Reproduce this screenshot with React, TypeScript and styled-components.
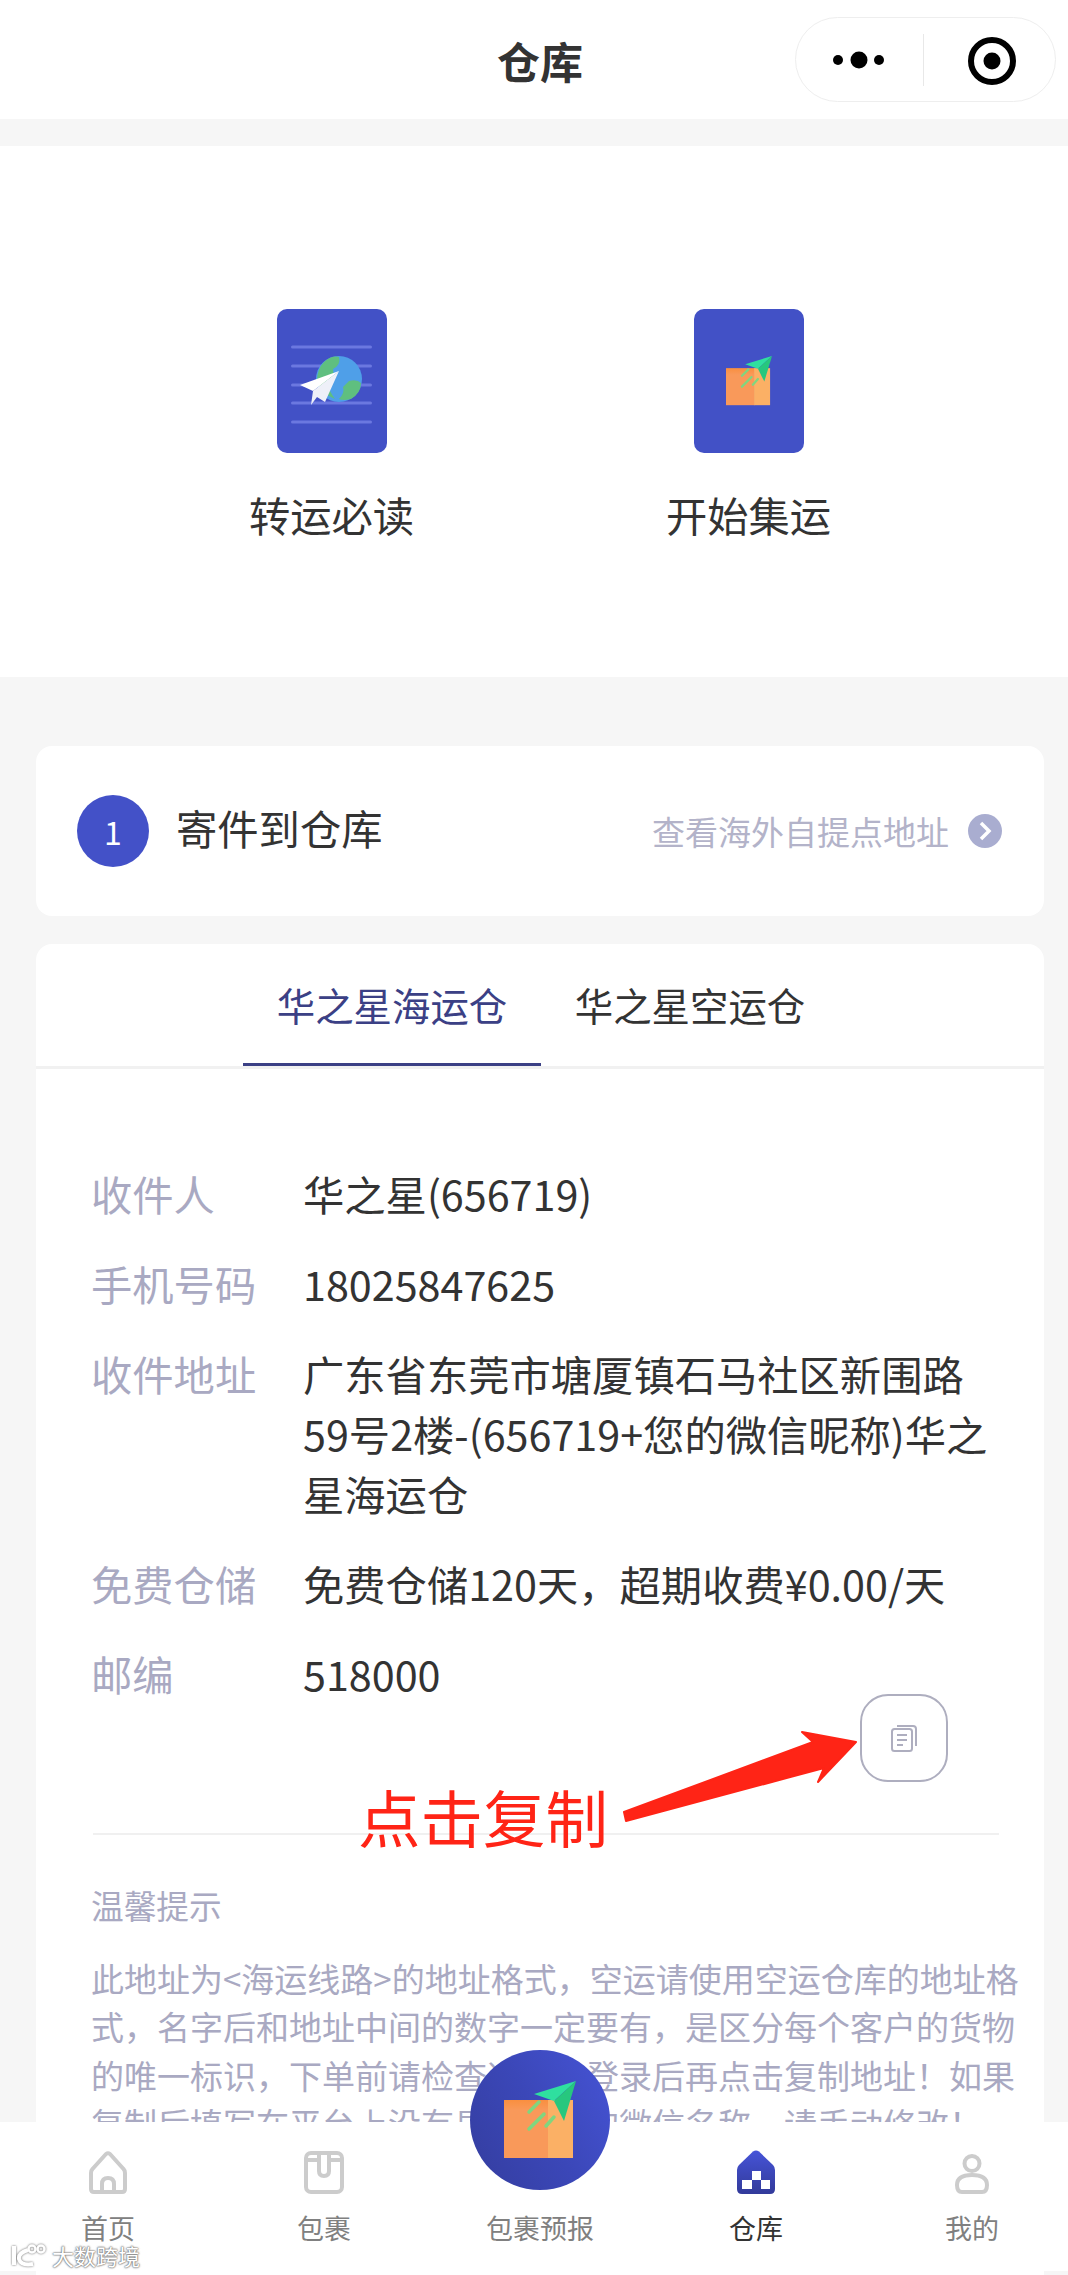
import React from 'react';
import styled, { createGlobalStyle } from 'styled-components';

const Global = createGlobalStyle`
  html, body { margin: 0; padding: 0; background: #f6f6f6; }
  body { font-family: "Noto Sans CJK SC", "Noto Sans", sans-serif; color: #333; }
`;

const Viewport = styled.div`
  position: relative;
  width: 1068px;
  height: 2275px;
  overflow: hidden;
  background: #f6f6f6;
`;
const Page = styled.div`
  position: relative;
  width: 1080px;
  height: 2275px;
`;
const NavBar = styled.header`
  position: relative;
  height: 119px;
  background: #fff;
  display: flex;
  align-items: center;
  justify-content: center;
`;
const NavTitle = styled.h1`
  margin: 0;
  font-size: 43px;
  line-height: 60px;
  font-weight: 700;
  color: #333;
`;
const Capsule = styled.div`
  position: absolute;
  left: 795px;
  top: 17px;
  width: 261px;
  height: 85px;
  box-sizing: border-box;
  border: 1px solid #eeeeee;
  border-radius: 43px;
  background: #fff;
  display: flex;
  align-items: center;
`;
const CapsuleCell = styled.div<{ $w: number }>`
  width: ${p => p.$w}px;
  height: 52px;
  display: flex;
  align-items: center;
  justify-content: center;
  &:first-child { border-right: 1px solid #e8e8e8; }
  &:last-child { padding: 3px 0 0 5px; }
`;
const QuickSection = styled.section`
  margin-top: 27px;
  height: 531px;
  box-sizing: border-box;
  padding-top: 163px;
  background: #fff;
  display: grid;
  grid-template-columns: 417px 417px;
  justify-content: center;
  align-content: start;
`;
const QuickItem = styled.div`
  display: flex;
  flex-direction: column;
  align-items: center;
`;
const QuickCard = styled.div`
  width: 110px;
  height: 144px;
  border-radius: 10px;
  background: #4251c6;
  display: flex;
  align-items: center;
  justify-content: center;
  overflow: hidden;
`;
const QuickLabel = styled.div`
  margin-top: 33px;
  font-size: 41.3px;
  line-height: 56px;
  color: #333;
`;
const Card = styled.section`
  margin: 0 36px;
  background: #fff;
  border-radius: 16px;
`;
const StepCard = styled(Card)`
  margin-top: 69px;
  height: 170px;
  box-sizing: border-box;
  padding: 0 42px 0 41px;
  display: flex;
  align-items: center;
`;
const StepBadge = styled.div`
  width: 72px;
  height: 72px;
  border-radius: 50%;
  background: #4351c8;
  color: #fff;
  font-size: 32px;
  display: flex;
  align-items: center;
  justify-content: center;
`;
const StepTitle = styled.div`
  margin: -8px 0 0 27px;
  font-size: 41.3px;
  line-height: 56px;
  color: #333;
`;
const StepLink = styled.div`
  margin-left: auto;
  font-size: 33px;
  line-height: 50px;
  color: #b3b3c9;
`;
const Chevron = styled.div`
  margin-left: 19px;
  width: 34px;
  height: 34px;
  border-radius: 50%;
  background: #a9add0;
  display: flex;
  align-items: center;
  justify-content: center;
`;
const AddressCard = styled(Card)`
  margin-top: 28px;
  height: 1400px;
  display: flex;
  flex-direction: column;
`;
const Tabs = styled.div`
  height: 125px;
  box-sizing: border-box;
  padding-left: 2px;
  border-bottom: 3px solid #f1f1f1;
  display: flex;
  justify-content: center;
`;
const Tab = styled.div<{ $active?: boolean }>`
  width: 298px;
  height: 122px;
  box-sizing: border-box;
  display: flex;
  align-items: center;
  justify-content: center;
  font-size: 38.4px;
  color: ${p => (p.$active ? '#3b4085' : '#333')};
  border-bottom: 3px solid ${p => (p.$active ? '#3b4085' : 'transparent')};
`;
const Rows = styled.div`
  padding: 94px 45px 0 55px;
  display: flex;
  flex-direction: column;
  gap: 30px;
`;
const Row = styled.div`
  display: grid;
  grid-template-columns: 212px 1fr;
  font-size: 41.3px;
  line-height: 60px;
`;
const RowLabel = styled.div`
  color: #a9a9c2;
`;
const RowValue = styled.div`
  color: #333;
  white-space: nowrap;
`;
const CopyButton = styled.div`
  align-self: flex-end;
  margin: -9px 96px 0 0;
  width: 88px;
  height: 88px;
  box-sizing: border-box;
  border: 2px solid #aeaebf;
  border-radius: 28px;
  display: flex;
  align-items: center;
  justify-content: center;
`;
const Divider = styled.div`
  margin: 51px 45px 0 57px;
  height: 2px;
  background: #f0f0f0;
`;
const Tips = styled.div`
  padding: 46px 0 0 55px;
  color: #a9a9c2;
`;
const TipsTitle = styled.div`
  font-size: 32.7px;
  line-height: 48px;
`;
const TipsBody = styled.div`
  margin-top: 25px;
  font-size: 33px;
  line-height: 48.4px;
  white-space: nowrap;
`;
const Annotation = styled.div`
  position: absolute;
  left: 358px;
  top: 1780px;
  font-size: 62.5px;
  line-height: 72px;
  color: #ff2416;
  white-space: nowrap;
`;
const ArrowMark = styled.svg`
  position: absolute;
  left: 610px;
  top: 1720px;
`;
const TabBar = styled.nav`
  position: absolute;
  left: 0;
  bottom: 4px;
  width: 1080px;
  height: 149px;
  background: #fff;
  display: grid;
  grid-template-columns: repeat(5, 216px);
`;
const TabItem = styled.div`
  padding-top: 28px;
  display: flex;
  flex-direction: column;
  align-items: center;
`;
const TabIcon = styled.div`
  height: 44px;
  display: flex;
  align-items: flex-end;
  justify-content: center;
`;
const TabLabel = styled.div<{ $active?: boolean }>`
  margin-top: 19px;
  font-size: 27px;
  line-height: 30px;
  color: ${p => (p.$active ? '#333' : '#808080')};
`;
const CenterButton = styled.div`
  position: absolute;
  left: 470px;
  bottom: 85px;
  width: 140px;
  height: 140px;
  border-radius: 50%;
  background: linear-gradient(60deg, #343d9e 0%, #3b47b8 50%, #4654d6 100%);
  display: flex;
  align-items: center;
  justify-content: center;
`;
const CenterGlyph = styled.div`
  margin-top: -2px;
  display: flex;
`;
const Watermark = styled.div`
  position: absolute;
  left: 10px;
  top: 2244px;
  display: flex;
  align-items: center;
  gap: 4px;
  font-size: 22px;
  line-height: 23px;
  color: #fff;
  text-shadow: 0 0 2px #777, 0 0 2px #777, 0 0 1px #777;
`;
const WatermarkLogo = styled.svg`
  filter: drop-shadow(0 0 1px #666);
`;

const PackagePlane = ({ width, id }: { width: number; id: string }) => (
  <svg width={width} height={(width * 77) / 72} viewBox="0 0 72 77">
    <defs>
      <linearGradient id={id} x1="0" y1="0" x2="0" y2="1">
        <stop offset="0" stopColor="#f98f3f" />
        <stop offset="0.18" stopColor="#f9995a" />
      </linearGradient>
    </defs>
    <rect x="0" y="19" width="45" height="58" fill={`url(#${id})`} />
    <rect x="44" y="19" width="25" height="58" fill="#fbb065" />
    <g stroke="#7fd67f" strokeWidth="3.5" strokeLinecap="round">
      <line x1="25" y1="31" x2="35" y2="21" />
      <line x1="25" y1="48" x2="40" y2="33" />
      <line x1="42" y1="45" x2="50" y2="36" />
    </g>
    <polygon points="72,0 30,13 50,20" fill="#2fdf9f" />
    <polygon points="72,0 50,20 60,40" fill="#27c77e" />
  </svg>
);

const GuideArt = () => (
  <svg width="110" height="144" viewBox="0 0 110 144">
    {[38, 57, 76, 94, 113].map(y => (
      <rect key={y} x="14" y={y - 1.5} width="81" height="3" rx="1.5" fill="#6b78e0" />
    ))}
    <circle cx="62" cy="70" r="23" fill="#4f9fe8" />
    <path d="M47 53 Q55 46 62 48 Q64 56 56 60 Q58 68 50 74 Q52 82 58 90 Q44 84 40 72 Q40 60 47 53Z" fill="#5fbf7f" />
    <path d="M72 72 Q80 70 84 74 Q84 84 74 90 Q66 92 62 90 Q68 84 66 78 Z" fill="#5fbf7f" />
    <polygon points="62,62 23,76 36,82" fill="#ffffff" />
    <polygon points="62,62 36,82 34,96 40,88 48,93" fill="#eef0f8" />
  </svg>
);

const HomeIcon = () => (
  <svg width="38" height="43" viewBox="0 0 38 43" fill="none" stroke="#cccccc" strokeWidth="4" strokeLinejoin="round">
    <path d="M17 3 Q19 1.500 21 3 L34.500 18 Q36 19.500 36 22 V38 Q36 41 33 41 H5 Q2 41 2 38 V22 Q2 19.500 3.500 18 Z" />
    <path d="M13 41 V33 Q13 27 19 27 Q25 27 25 33 V41" />
  </svg>
);
const ParcelIcon = () => (
  <svg width="40" height="43" viewBox="0 0 40 43" fill="none" stroke="#cccccc" strokeWidth="4" strokeLinejoin="round">
    <rect x="2" y="2" width="36" height="39" rx="5" />
    <path d="M2 9 H15 M25 9 H38" />
    <path d="M15 2 V20 Q15 25 20 25 Q25 25 25 20 V2" />
  </svg>
);
const WarehouseIcon = () => (
  <svg width="38" height="44" viewBox="0 0 38 44">
    <defs>
      <linearGradient id="wh" x1="0" y1="0" x2="0" y2="1">
        <stop offset="0" stopColor="#4654d8" />
        <stop offset="1" stopColor="#323a9a" />
      </linearGradient>
    </defs>
    <path d="M16 1.500 Q19 -0.500 22 1.500 L36 15 Q38 17 38 20 V39 Q38 44 33 44 H5 Q0 44 0 39 V20 Q0 17 2 15 Z" fill="url(#wh)" />
    <rect x="15" y="21" width="9" height="9" fill="#fff" />
    <rect x="5" y="30" width="10" height="9" fill="#fff" />
    <rect x="24" y="30" width="9" height="9" fill="#fff" />
  </svg>
);
const PersonIcon = () => (
  <svg width="34" height="40" viewBox="0 0 34 40" fill="none" stroke="#cccccc" strokeWidth="4">
    <circle cx="17" cy="9.500" r="7.500" />
    <path d="M2 31 Q2 21 17 21 Q32 21 32 31 Q32 38 27 38 H7 Q2 38 2 31Z" />
  </svg>
);

export default function App() {
  return (
    <Viewport>
      <Global />
      <Page>
        <NavBar>
          <NavTitle>仓库</NavTitle>
          <Capsule>
            <CapsuleCell $w={130}>
              <svg width="54" height="18" viewBox="0 0 54 18">
                <circle cx="6" cy="9" r="5" fill="#000" />
                <circle cx="27" cy="9" r="8.500" fill="#000" />
                <circle cx="47" cy="9" r="5" fill="#000" />
              </svg>
            </CapsuleCell>
            <CapsuleCell $w={129}>
              <svg width="48" height="48" viewBox="0 0 48 48">
                <circle cx="24" cy="24" r="21" fill="none" stroke="#000" strokeWidth="6" />
                <circle cx="24" cy="24" r="8.500" fill="#000" />
              </svg>
            </CapsuleCell>
          </Capsule>
        </NavBar>

        <QuickSection>
          <QuickItem>
            <QuickCard><GuideArt /></QuickCard>
            <QuickLabel>转运必读</QuickLabel>
          </QuickItem>
          <QuickItem>
            <QuickCard><PackagePlane width={46} id="pkg-small" /></QuickCard>
            <QuickLabel>开始集运</QuickLabel>
          </QuickItem>
        </QuickSection>

        <StepCard>
          <StepBadge>1</StepBadge>
          <StepTitle>寄件到仓库</StepTitle>
          <StepLink>查看海外自提点地址</StepLink>
          <Chevron>
            <svg width="16" height="22" viewBox="0 0 16 22" fill="none" stroke="#fff" strokeWidth="3.500">
              <path d="M4 3 L12 11 L4 19" />
            </svg>
          </Chevron>
        </StepCard>

        <AddressCard>
          <Tabs>
            <Tab $active>华之星海运仓</Tab>
            <Tab>华之星空运仓</Tab>
          </Tabs>
          <Rows>
            <Row><RowLabel>收件人</RowLabel><RowValue>华之星(656719)</RowValue></Row>
            <Row><RowLabel>手机号码</RowLabel><RowValue>18025847625</RowValue></Row>
            <Row>
              <RowLabel>收件地址</RowLabel>
              <RowValue>广东省东莞市塘厦镇石马社区新围路<br />59号2楼-(656719+您的微信昵称)华之<br />星海运仓</RowValue>
            </Row>
            <Row><RowLabel>免费仓储</RowLabel><RowValue>免费仓储120天，超期收费¥0.00/天</RowValue></Row>
            <Row><RowLabel>邮编</RowLabel><RowValue>518000</RowValue></Row>
          </Rows>
          <CopyButton>
            <svg width="26" height="28" viewBox="0 0 26 28" fill="none" stroke="#aeaebf" strokeWidth="2">
              <path d="M6 2 H22 Q25 2 25 5 V22" />
              <rect x="1" y="5" width="20" height="22" rx="2.500" />
              <path d="M6 11 H16 M6 16 H16 M6 21 H12" />
            </svg>
          </CopyButton>
          <Divider />
          <Tips>
            <TipsTitle>温馨提示</TipsTitle>
            <TipsBody>
              此地址为&lt;海运线路&gt;的地址格式，空运请使用空运仓库的地址格<br />
              式，名字后和地址中间的数字一定要有，是区分每个客户的货物<br />
              的唯一标识，下单前请检查这里，登录后再点击复制地址！如果<br />
              复制后填写在平台上没有显示出您的微信名称，请手动修改！
            </TipsBody>
          </Tips>
        </AddressCard>

        <Annotation>点击复制</Annotation>
        <ArrowMark width="260" height="110" viewBox="0 0 260 110">
          <polygon
            points="246,22 192,12 203,22 14,92 16,101 214,48 208,62"
            fill="#ff2416"
            stroke="#ff2416"
            strokeWidth="2"
            strokeLinejoin="round"
          />
        </ArrowMark>

        <TabBar>
          <TabItem><TabIcon><HomeIcon /></TabIcon><TabLabel>首页</TabLabel></TabItem>
          <TabItem><TabIcon><ParcelIcon /></TabIcon><TabLabel>包裹</TabLabel></TabItem>
          <TabItem><TabIcon /><TabLabel>包裹预报</TabLabel></TabItem>
          <TabItem><TabIcon><WarehouseIcon /></TabIcon><TabLabel $active>仓库</TabLabel></TabItem>
          <TabItem><TabIcon><PersonIcon /></TabIcon><TabLabel>我的</TabLabel></TabItem>
        </TabBar>
        <CenterButton>
          <CenterGlyph><PackagePlane width={72} id="pkg-large" /></CenterGlyph>
        </CenterButton>

        <Watermark>
          <WatermarkLogo width="38" height="23" viewBox="0 0 38 23" fill="none" stroke="#fff" strokeWidth="4">
            <path d="M4 2 V21" />
            <path d="M18 6 Q8 9 9 15 Q11 22 23 20" />
            <circle cx="22" cy="5" r="3.500" strokeWidth="2.500" />
            <circle cx="31" cy="5" r="3.500" strokeWidth="2.500" />
          </WatermarkLogo>
          大数跨境
        </Watermark>
      </Page>
    </Viewport>
  );
}
